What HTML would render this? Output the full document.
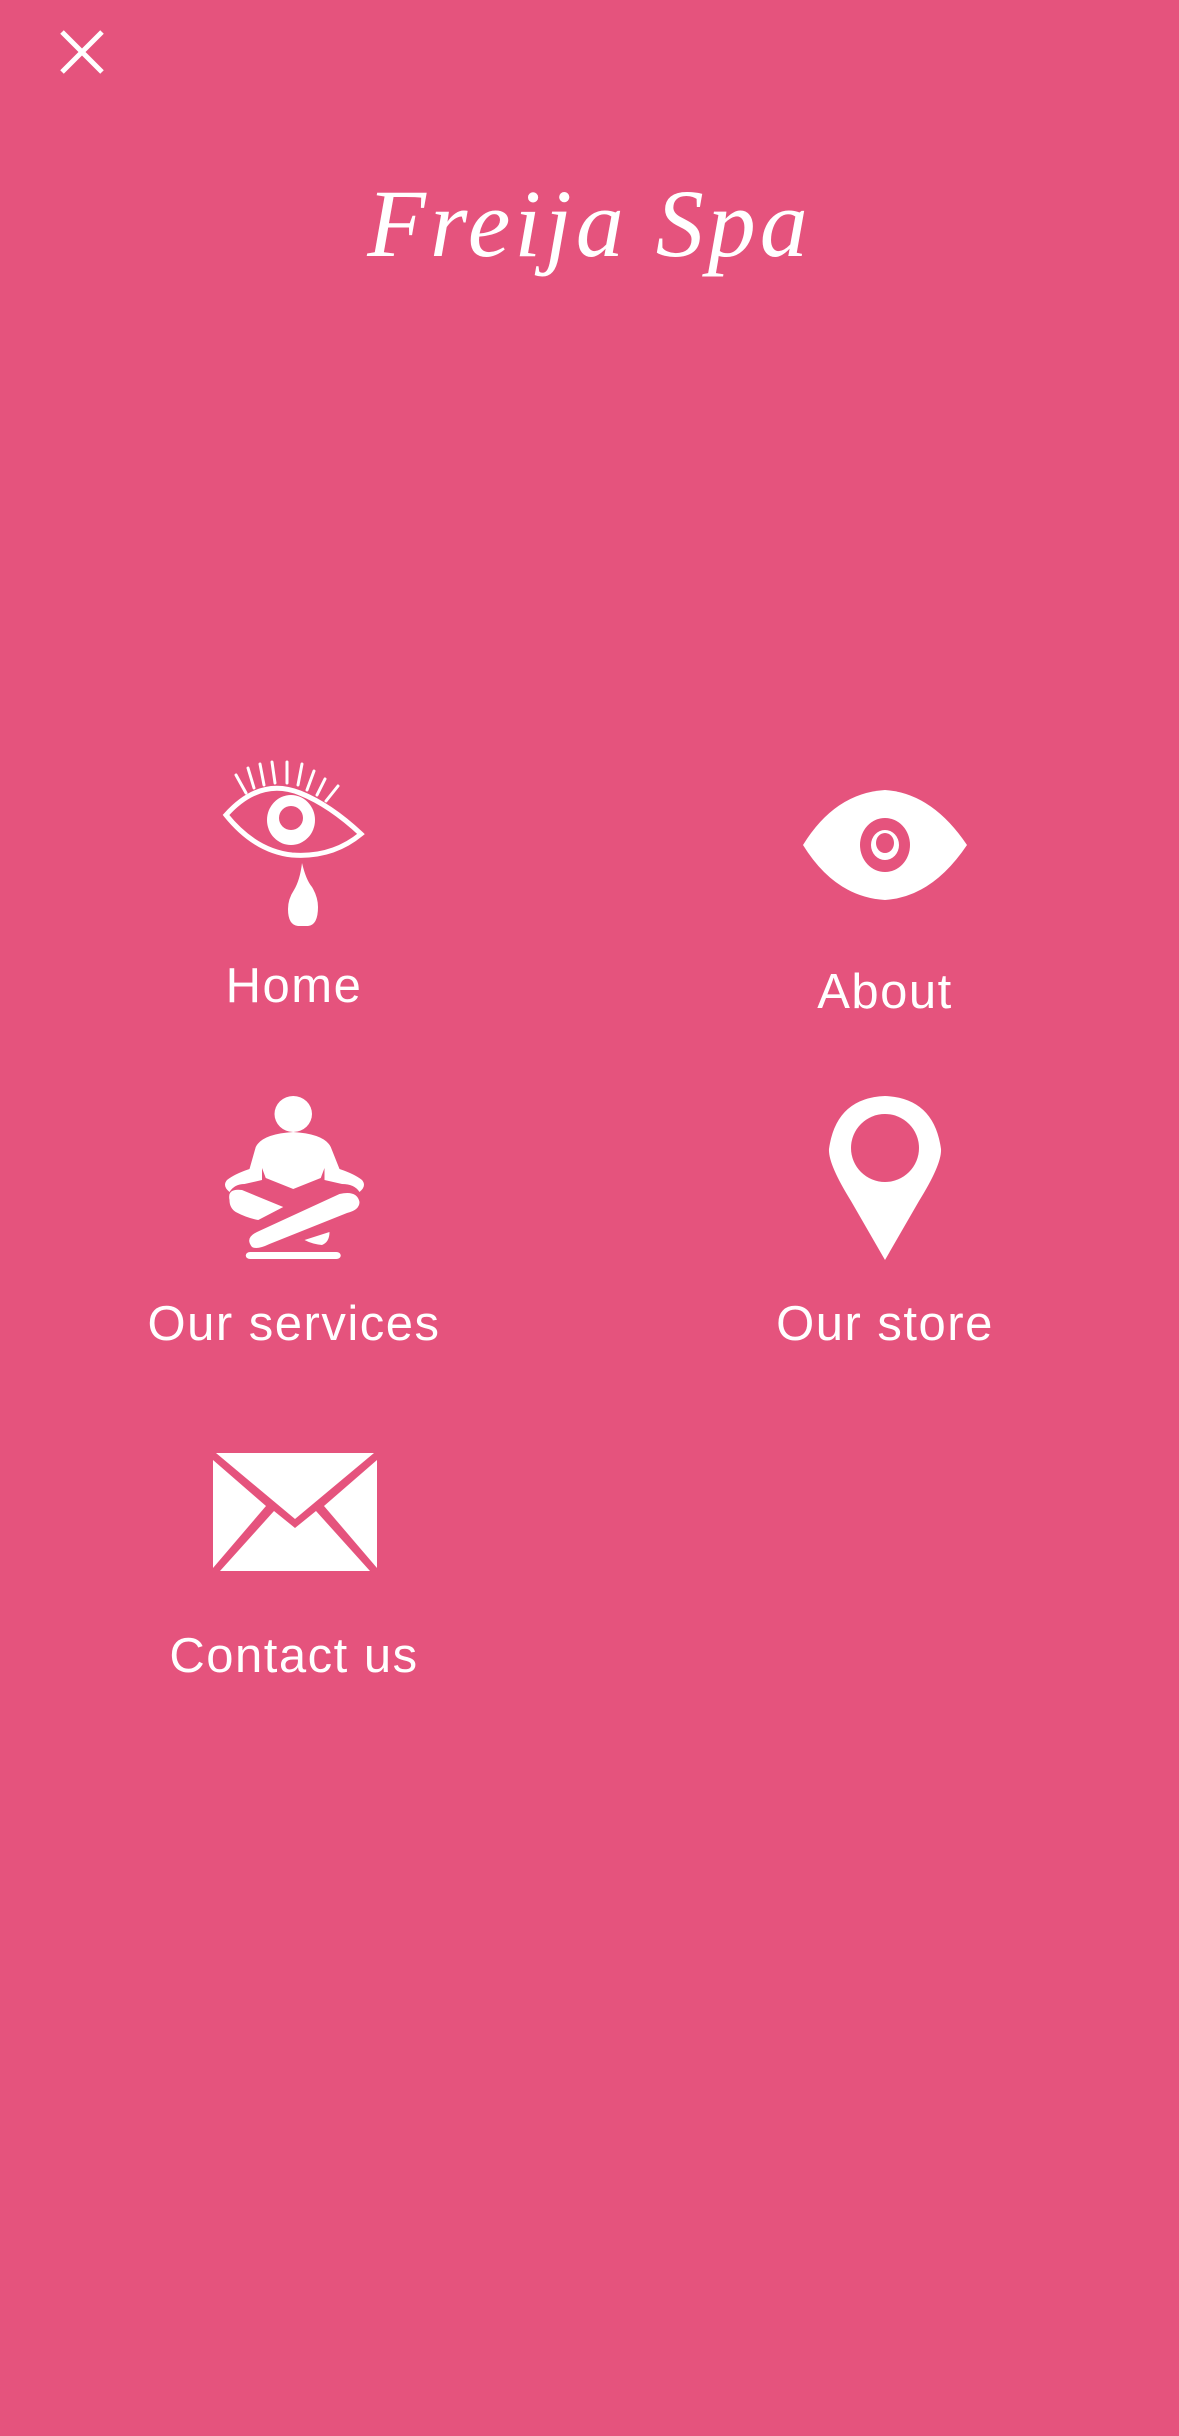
<!DOCTYPE html>
<html><head><meta charset="utf-8"><style>
html,body{margin:0;padding:0}
body{width:1179px;height:2436px;background:#E5537D;position:relative;overflow:hidden;font-family:"Liberation Sans",sans-serif;color:#fff}
.t{position:absolute;font-size:49px;letter-spacing:1.5px;line-height:1;white-space:nowrap;transform:translateX(-50%)}
svg{position:absolute}
</style></head><body>
<svg style="left:58px;top:28px" width="48" height="48" viewBox="0 0 48 48"><path d="M4 4L44 44M44 4L4 44" stroke="#fff" stroke-width="5"/></svg>
<div style="position:absolute;left:0;width:1179px;top:168px;text-align:center;font-family:'Liberation Serif',serif;font-style:italic;font-size:96px;font-weight:normal;letter-spacing:4px;">Freija Spa</div>

<!-- Home eye -->
<svg style="left:220px;top:755px" width="150" height="175" viewBox="0 0 150 175">
<g stroke="#fff" stroke-width="3" stroke-linecap="round" fill="none">
<path d="M16 20L26 38M28 13L34 33M40 9L44 30M52 7L55 28M67 7L67 28M82 9L78 30M94 16L87 35M105 24L97 40M118 31L106 46"/>
<path d="M6 60Q40 22 80 38Q110 50 141 79Q112 103 72 100Q35 96 6 60Z" stroke-width="5"/>
</g>
<ellipse cx="71" cy="65" rx="24" ry="25" fill="#fff"/><ellipse cx="71" cy="63" rx="12" ry="12" fill="#E5537D"/>
<path d="M82 108Q86 125 92 132Q98 142 98 152Q98 170 88 171L78 171Q68 170 68 154Q68 144 74 135Q80 125 82 108Z" fill="#fff"/>
</svg>
<div class="t" style="left:294px;top:962px">Home</div>

<!-- About eye -->
<svg style="left:800px;top:785px" width="170" height="120" viewBox="0 0 170 120">
<path d="M3 60Q35 8 85 5Q132 8 167 60Q132 112 85 115Q35 112 3 60Z" fill="#fff"/>
<ellipse cx="85" cy="60" rx="25" ry="27" fill="#E5537D"/>
<ellipse cx="85" cy="60" rx="14" ry="15" fill="#fff"/>
<ellipse cx="85" cy="58" rx="9" ry="10" fill="#E5537D"/>
</svg>
<div class="t" style="left:885px;top:968px">About</div>

<!-- Meditation -->
<svg style="left:220px;top:1092px" width="150" height="172" viewBox="0 0 150 172">
<g transform="translate(-18,0) scale(1.25,1)">
<ellipse cx="73" cy="22" rx="15" ry="18" fill="#fff"/>
<path d="M43 55Q48 42 73 40Q98 42 103 55L110 77Q122 82 128 88Q132 94 126 100Q122 92 112 92L98 88L98 76L95 86L73 97L51 86L48 76L48 88L34 92Q26 92 22 100Q16 94 20 88Q26 82 38 77Z" fill="#fff"/>
<path d="M22 108Q20 96 32 98L65 115L45 128Q36 126 27 120Q22 116 22 108Z" fill="#fff"/>
<path d="M40 155Q34 146 44 140L110 102Q124 98 126 110Q126 118 116 121L54 152Q44 158 40 155Z" fill="#fff"/>
<path d="M82 148L102 140Q102 150 96 153Q88 152 82 148Z" fill="#fff"/>
<rect x="35" y="160" width="76" height="7" rx="3.5" fill="#fff"/>
</g>
</svg>
<div class="t" style="left:294px;top:1300px">Our services</div>

<!-- Pin -->
<svg style="left:826px;top:1094px" width="118" height="170" viewBox="0 0 118 170">
<path d="M59 2Q10 4 3 55Q2 70 25 107L59 166L93 107Q116 70 115 55Q108 4 59 2Z" fill="#fff"/>
<ellipse cx="59" cy="54" rx="34" ry="34" fill="#E5537D"/>
</svg>
<div class="t" style="left:885px;top:1300px">Our store</div>

<!-- Envelope -->
<svg style="left:210px;top:1450px" width="170" height="124" viewBox="0 0 170 124">
<path d="M6 3L164 3L85 69Z" fill="#fff"/>
<path d="M3 10L3 118L56 56Z" fill="#fff"/>
<path d="M167 10L167 118L114 56Z" fill="#fff"/>
<path d="M10 121L64 61L85 78L106 61L160 121Z" fill="#fff"/>
</svg>
<div class="t" style="left:294px;top:1632px">Contact us</div>
</body></html>
